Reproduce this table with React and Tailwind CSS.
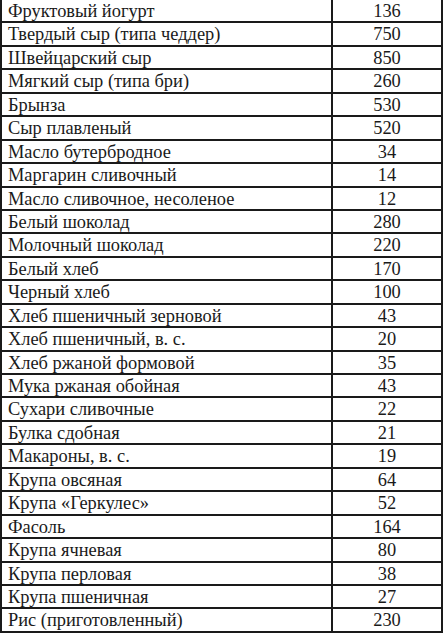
import React from "react";

const rows = [
  ["Фруктовый йогурт", "136"],
  ["Твердый сыр (типа чеддер)", "750"],
  ["Швейцарский сыр", "850"],
  ["Мягкий сыр (типа бри)", "260"],
  ["Брынза", "530"],
  ["Сыр плавленый", "520"],
  ["Масло бутербродное", "34"],
  ["Маргарин сливочный", "14"],
  ["Масло сливочное, несоленое", "12"],
  ["Белый шоколад", "280"],
  ["Молочный шоколад", "220"],
  ["Белый хлеб", "170"],
  ["Черный хлеб", "100"],
  ["Хлеб пшеничный зерновой", "43"],
  ["Хлеб пшеничный, в. с.", "20"],
  ["Хлеб ржаной формовой", "35"],
  ["Мука ржаная обойная", "43"],
  ["Сухари сливочные", "22"],
  ["Булка сдобная", "21"],
  ["Макароны, в. с.", "19"],
  ["Крупа овсяная", "64"],
  ["Крупа «Геркулес»", "52"],
  ["Фасоль", "164"],
  ["Крупа ячневая", "80"],
  ["Крупа перловая", "38"],
  ["Крупа пшеничная", "27"],
  ["Рис (приготовленный)", "230"],
];

export default function App() {
  return (
    <div className="w-[444px] h-[634px] bg-white overflow-hidden">
      <div className="w-[443px] border-l-2 border-r-2 border-[#1a1a1a] text-[#1a1a1a] text-[18.4px] leading-none font-['Liberation_Serif',serif]">
        {rows.map(([name, val], i) => (
          <div key={i} className="flex h-[23.45px] border-b-2 border-[#1a1a1a]">
            <div className="w-[331px] border-r-2 border-[#1a1a1a] pl-[6px] pt-[1px] flex items-center whitespace-nowrap">
              {name}
            </div>
            <div className="flex-1 pt-[1px] flex items-center justify-center">{val}</div>
          </div>
        ))}
      </div>
    </div>
  );
}
